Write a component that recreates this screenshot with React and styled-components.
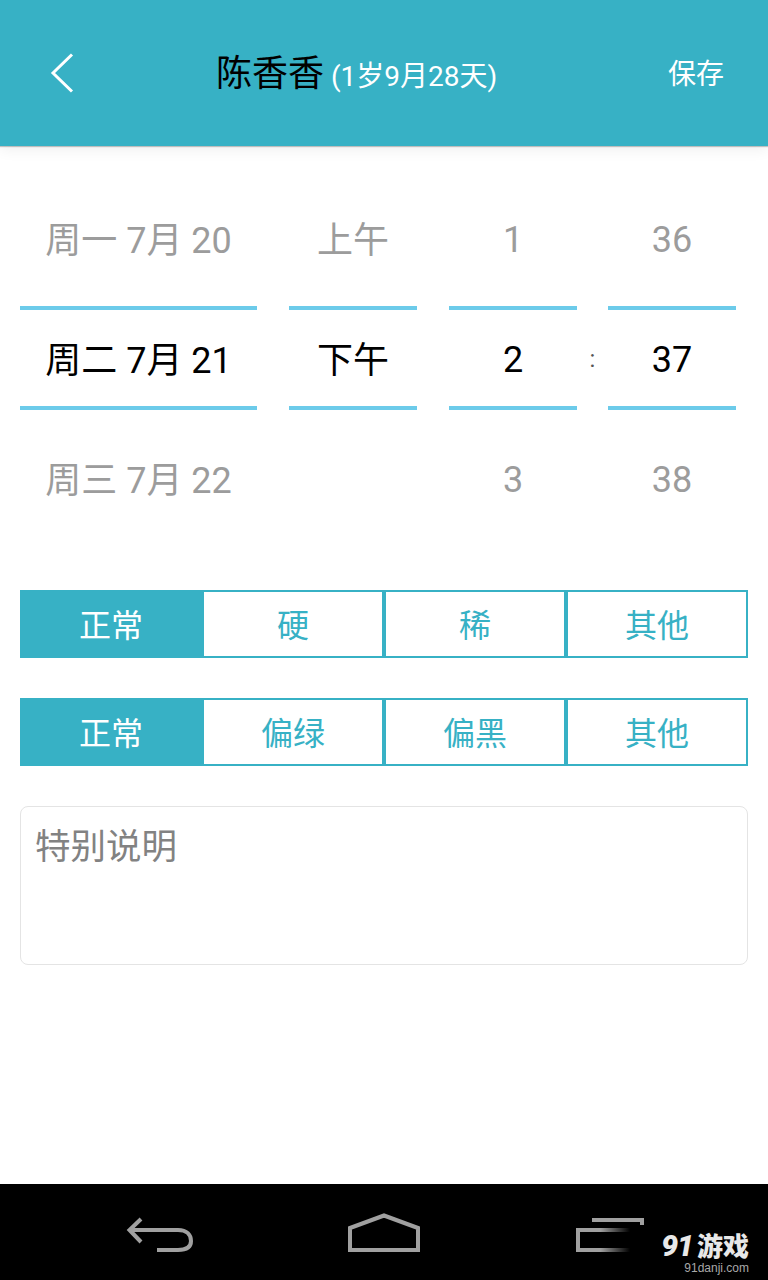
import React from "react";
import styled, { createGlobalStyle } from "styled-components";

const Global = createGlobalStyle`
  html, body { margin: 0; padding: 0; background: #fff; }
  body { font-family: Roboto, "Noto Sans CJK SC", sans-serif; }
  * { box-sizing: border-box; }
`;
const Page = styled.div`
  width: 768px; height: 1280px; display: flex; flex-direction: column; overflow: hidden; background: #fff;
`;
const Header = styled.header`
  height: 146px; flex: none; background: #37b1c5; display: flex; align-items: center;
  padding: 0 44px 0 50px; position: relative; z-index: 1;
  box-shadow: 0 1px 1px rgba(0,0,0,.22), 0 3px 14px rgba(0,0,0,.07);
`;
const BackIcon = styled.svg`width: 24px; height: 40px; flex: none; margin-top: -1px;`;
const Title = styled.div`
  margin-left: 142px; padding-top: 5px; color: #000; font-size: 36px; line-height: 50px; white-space: nowrap;
`;
const Age = styled.span`color: #fff; font-size: 28px; margin-left: 7px;`;
const Save = styled.div`margin-left: auto; padding-top: 4px; color: #fff; font-size: 28px; line-height: 40px; white-space: nowrap;`;
const Main = styled.main`flex: 1; padding: 26px 20px 0; display: flex; flex-direction: column;`;
const Picker = styled.div`display: flex; width: 716px;`;
const Wheel = styled.div`
  width: ${p => p.$w}px; flex: none; margin-right: ${p => p.$mr || 0}px;
  display: flex; flex-direction: column;
`;
const Cell = styled.div`
  height: ${p => p.$h}px; display: flex; align-items: center; justify-content: center;
  font-size: 36px; white-space: nowrap; color: #9c9c9c;
  padding-bottom: ${p => p.$cjk ? 4 : 0}px; padding-top: ${p => p.$cjk ? 0 : 2}px;
`;
const Selected = styled(Cell)`
  color: #000; border-top: 4px solid #6ccbea; border-bottom: 4px solid #6ccbea;
  padding-bottom: ${p => p.$cjk ? 2 : 0}px; padding-top: ${p => p.$cjk ? 0 : 4}px;
`;
const Colon = styled.div`
  width: 31px; flex: none; margin-top: 134px; height: 104px; display: flex; align-items: center; justify-content: center;
  font-size: 24px; color: #555; padding-top: 2px;
`;
const Segments = styled.div`
  display: grid; grid-template-columns: repeat(4, 182px); margin-top: ${p => p.$mt}px;
`;
const Segment = styled.div`
  height: 68px; border: 2px solid #37b1c5; display: flex; align-items: center; justify-content: center;
  font-size: 32px; padding-bottom: 3px; background: ${p => p.$on ? "#37b1c5" : "#fff"}; color: ${p => p.$on ? "#fff" : "#37b1c5"};
`;
const Note = styled.div`
  margin-top: 40px; width: 728px; height: 159px; border: 1px solid #e4e4e4; border-radius: 8px;
  padding: 15px 14px; font-size: 35.500px; line-height: 50px; color: #828282;
`;
const Nav = styled.nav`
  height: 96px; flex: none; background: #000; position: relative;
`;
const NavIcons = styled.svg`display: block; width: 768px; height: 96px;`;
const Watermark = styled.div`
  position: absolute; right: 19px; top: 46px; display: flex; flex-direction: column; align-items: flex-end;
  color: #e8e8e8;
`;
const Brand = styled.div`
  font-family: "Noto Sans CJK SC", sans-serif; font-size: 26px; line-height: 30px; font-weight: 900; white-space: nowrap;
`;
const BrandNum = styled.span`font-family: Roboto, sans-serif; font-weight: 900; font-style: italic; font-size: 30px; letter-spacing: -1px; margin-right: 4px;`;
const Domain = styled.div`font-family: "Liberation Sans", sans-serif; font-size: 12px; line-height: 14px; color: #a8a8a8;`;

const columns = [
  { w: 237, mr: 32, cjk: true, items: ["周一 7月 20", "周二 7月 21", "周三 7月 22"] },
  { w: 128, mr: 32, cjk: true, items: ["上午", "下午", ""] },
  { w: 128, items: ["1", "2", "3"] },
];

const Column = ({ w, mr, cjk, items }) => (
  <Wheel $w={w} $mr={mr}>
    <Cell $h={134} $cjk={cjk}>{items[0]}</Cell>
    <Selected $h={104} $cjk={cjk}>{items[1]}</Selected>
    <Cell $h={138} $cjk={cjk}>{items[2]}</Cell>
  </Wheel>
);

const Group = ({ mt, items }) => (
  <Segments $mt={mt}>
    {items.map((t, i) => <Segment key={t} $on={i === 0}>{t}</Segment>)}
  </Segments>
);

export default function App() {
  return (
    <Page>
      <Global />
      <Header>
        <BackIcon viewBox="0 0 24 40" fill="none" stroke="#fff" strokeWidth="3">
          <path d="M22 1.500 L3 20 L22 38.500" />
        </BackIcon>
        <Title>陈香香<Age>(1岁9月28天)</Age></Title>
        <Save>保存</Save>
      </Header>
      <Main>
        <Picker>
          {columns.map(c => <Column key={c.items[1]} {...c} />)}
          <Colon>:</Colon>
          <Column w={128} items={["36", "37", "38"]} />
        </Picker>
        <Group mt={42} items={["正常", "硬", "稀", "其他"]} />
        <Group mt={40} items={["正常", "偏绿", "偏黑", "其他"]} />
        <Note>特别说明</Note>
      </Main>
      <Nav>
        <NavIcons viewBox="0 0 768 96" fill="none">
          <defs>
            <linearGradient id="fade" gradientUnits="userSpaceOnUse" x1="576" y1="0" x2="630" y2="0">
              <stop offset="0" stopColor="#a0a0a0" />
              <stop offset="0.45" stopColor="#a0a0a0" />
              <stop offset="1" stopColor="#000" />
            </linearGradient>
          </defs>
          <g stroke="#a0a0a0" strokeWidth="4">
            <path d="M141 35 L129.500 46 L141 58" />
            <path d="M129 46 H178 C187 46 191 51 191 57 C191 63 187 66 178 66 H157" />
            <path d="M350 66 V44 L384 31.500 L418 44 V66 Z" />
            <path d="M592 36 H642 V41" />
          </g>
          <path d="M630 46 H578 V66 H630" stroke="url(#fade)" strokeWidth="4" />
        </NavIcons>
        <Watermark>
          <Brand><BrandNum>91</BrandNum>游戏</Brand>
          <Domain>91danji.com</Domain>
        </Watermark>
      </Nav>
    </Page>
  );
}
